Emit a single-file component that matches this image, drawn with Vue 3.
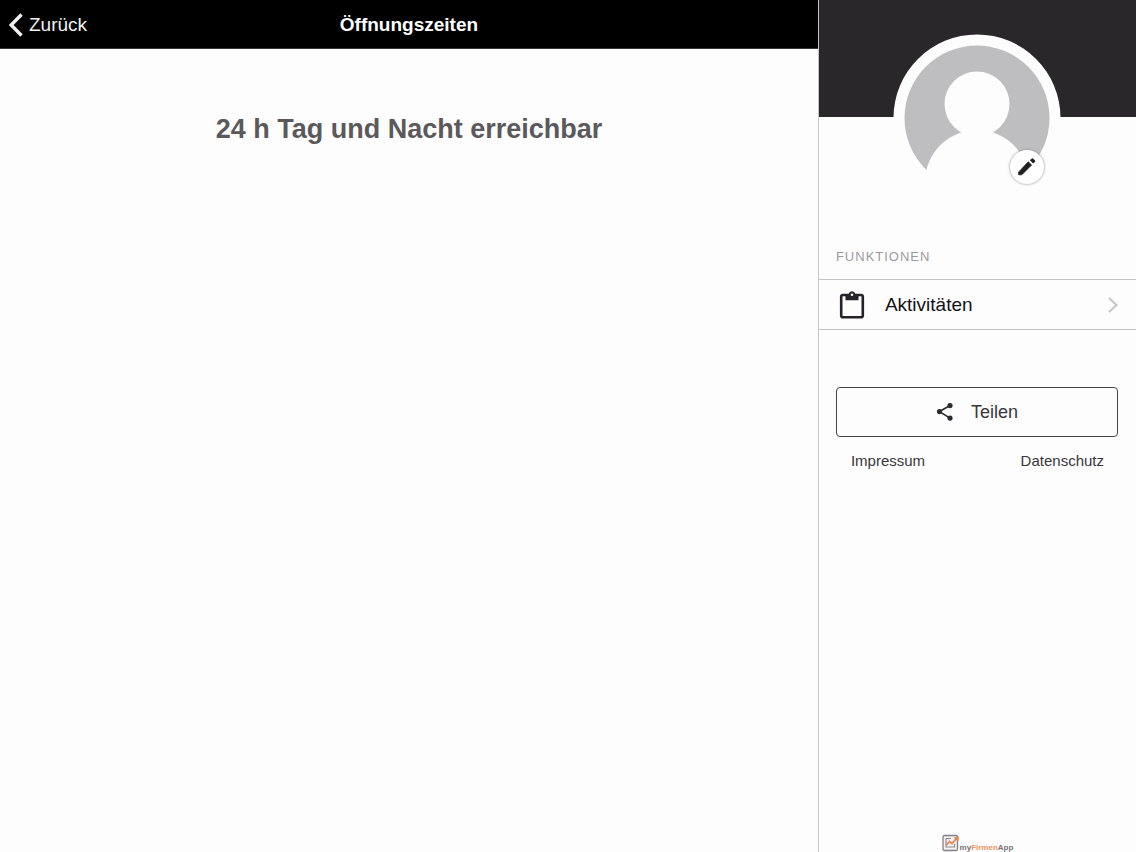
<script setup>
const links = ['Impressum', 'Datenschutz']
</script>

<template>
  <div class="app">
    <main class="content">
      <header class="bar">
        <button class="back" type="button">
          <svg width="14" height="24" viewBox="0 0 14 24" aria-hidden="true">
            <path d="M12.500 1.500 2.200 12l10.300 10.500" fill="none" stroke="currentColor" stroke-width="3.400" />
          </svg>
          <span>Zurück</span>
        </button>
        <h1>Öffnungszeiten</h1>
      </header>
      <h2>24 h Tag und Nacht erreichbar</h2>
    </main>

    <aside class="side">
      <div class="cover">
        <div class="avatar">
          <svg width="168" height="168" viewBox="0 0 168 168" role="img" aria-label="Profilbild">
            <defs>
              <clipPath id="portrait">
                <circle cx="84" cy="84" r="83.500" />
              </clipPath>
            </defs>
            <g clip-path="url(#portrait)">
              <rect width="168" height="168" fill="#fefdfe" />
              <circle cx="84" cy="84" r="72.500" fill="#bebdbf" />
              <circle cx="84" cy="70" r="32.500" fill="#fefdfe" />
              <circle cx="84" cy="148" r="52" fill="#fefdfe" />
            </g>
          </svg>
          <button class="edit" type="button" aria-label="Profil bearbeiten">
            <svg width="24" height="24" viewBox="0 0 24 24" aria-hidden="true">
              <path d="M3.600 17.200v2.600h3.200L16.600 10 13.200 6.800z" fill="#201e22" stroke="#201e22" stroke-width=".8" stroke-linejoin="round" />
              <path d="M14.900 5.300l3.300 3.300 1.600-1.600a1.300 1.300 0 0 0 0-1.800l-1.500-1.500a1.300 1.300 0 0 0-1.800 0z" fill="#201e22" />
            </svg>
          </button>
        </div>
      </div>

      <h3>FUNKTIONEN</h3>
      <button class="row" type="button">
        <svg width="26" height="28" viewBox="0 0 26 28" aria-hidden="true">
          <rect x="2.200" y="4" width="21.600" height="22.300" rx="1.800" fill="none" stroke="#252327" stroke-width="2.600" />
          <path d="M6.500 3h3.100a3.500 3.500 0 0 1 6.800 0h3.100v6.300h-13z" fill="#252327" />
          <circle cx="13" cy="3.800" r="1.300" fill="#fefdfe" />
        </svg>
        <span>Aktivitäten</span>
        <svg class="chevron" width="12" height="18" viewBox="0 0 12 18" aria-hidden="true">
          <path d="M2 2l7.500 7L2 16" fill="none" stroke="#c4c3c6" stroke-width="2" />
        </svg>
      </button>

      <button class="share" type="button">
        <svg width="18" height="20" viewBox="0 0 18 20" aria-hidden="true">
          <path d="M14 3.600 3.500 9.600l10.500 6.500" fill="none" stroke="#2c2a2e" stroke-width="1.700" />
          <g fill="#2c2a2e">
            <circle cx="14" cy="3.600" r="2.600" />
            <circle cx="3.500" cy="9.600" r="2.600" />
            <circle cx="14" cy="16.100" r="2.600" />
          </g>
        </svg>
        <span>Teilen</span>
      </button>

      <nav class="legal">
        <a v-for="link in links" :key="link" href="#">{{ link }}</a>
      </nav>

      <footer class="brand">
        <svg width="18" height="18" viewBox="0 0 18 18" aria-hidden="true">
          <rect x="1" y="1.500" width="14.500" height="15" rx="1.500" fill="#f3f1f1" stroke="#858184" stroke-width="1.300" />
          <path d="M4 4.500h5M4 4.500v8.500h8.500v-3" fill="none" stroke="#8f8b8e" stroke-width="1.200" />
          <path d="M4.500 11 7.500 7.500l2.500 2 4-4.500" fill="none" stroke="#e9844e" stroke-width="1.800" />
          <path d="M11.500 3.500 17 2.500l-.8 5.200z" fill="#e9844e" />
        </svg>
        <span class="name">my<b>Firmen</b>App</span>
      </footer>
    </aside>
  </div>
</template>

<style>
body {
  margin: 0;
  background: #fefdfe;
}
</style>

<style scoped>
.app {
  display: flex;
  min-height: 100vh;
  font-family: "Liberation Sans", Arial, sans-serif;
  color: #141216;
}

button {
  margin: 0;
  padding: 0;
  border: 0;
  background: none;
  font: inherit;
  color: inherit;
  cursor: pointer;
}

svg {
  display: block;
  flex: none;
}

.content {
  flex: 1;
  min-width: 0;
}

.bar {
  display: grid;
  grid-template-columns: 1fr auto 1fr;
  align-items: center;
  box-sizing: border-box;
  height: 49px;
  padding-top: 2px;
  border-bottom: 1px solid #39373a;
  background: #000;
  color: #fff;
}

.back {
  display: flex;
  align-items: center;
  justify-self: start;
  gap: 6px;
  padding-left: 9px;
  font-size: 19px;
  line-height: 24px;
  color: #f1f0f1;
}

h1 {
  margin: 0;
  font-size: 19px;
  line-height: 24px;
}

h2 {
  margin: 64px 16px 0;
  font-size: 27px;
  line-height: 32px;
  text-align: center;
  color: #5b595c;
}

.side {
  display: flex;
  flex-direction: column;
  box-sizing: border-box;
  width: 28%;
  border-left: 1px solid #c6c5c8;
}

.cover {
  display: flex;
  justify-content: center;
  height: 249px;
  background: linear-gradient(#2a272b 117px, transparent 117px);
}

.avatar {
  position: relative;
  width: 168px;
  height: 168px;
  margin-top: 34px;
}

.edit {
  position: absolute;
  right: 17px;
  bottom: 18px;
  display: grid;
  place-items: center;
  width: 34px;
  height: 34px;
  border-radius: 50%;
  background: #fff;
  box-shadow: 0 0 3px #8d8b8f;
}

h3 {
  margin: 0;
  padding: 0 17px 14px;
  font-size: 13px;
  font-weight: 400;
  line-height: 16px;
  letter-spacing: 1px;
  color: #9c9a9e;
}

.row {
  display: flex;
  align-items: center;
  box-sizing: border-box;
  height: 51px;
  padding: 0 17px 0 20px;
  border-top: 1px solid #c4c3c6;
  border-bottom: 1px solid #c4c3c6;
  gap: 20px;
  font-size: 19px;
  line-height: 24px;
}

.chevron {
  margin-left: auto;
}

.share {
  display: flex;
  align-items: center;
  justify-content: center;
  box-sizing: border-box;
  height: 50px;
  margin: 57px 18px 0 17px;
  border: 1px solid #454347;
  border-radius: 4px;
  gap: 17px;
  font-size: 18px;
  line-height: 24px;
  color: #38363a;
}

.legal {
  display: flex;
  justify-content: space-between;
  padding: 14px 32px;
  font-size: 15px;
  line-height: 20px;
}

.legal a {
  color: #38363a;
  text-decoration: none;
}

.brand {
  display: flex;
  align-items: flex-end;
  justify-content: center;
  height: 18px;
  margin-top: auto;
}

.name {
  font-size: 8px;
  font-weight: 700;
  line-height: 9px;
  color: #777376;
}

.name b {
  color: #ee9157;
}
</style>
